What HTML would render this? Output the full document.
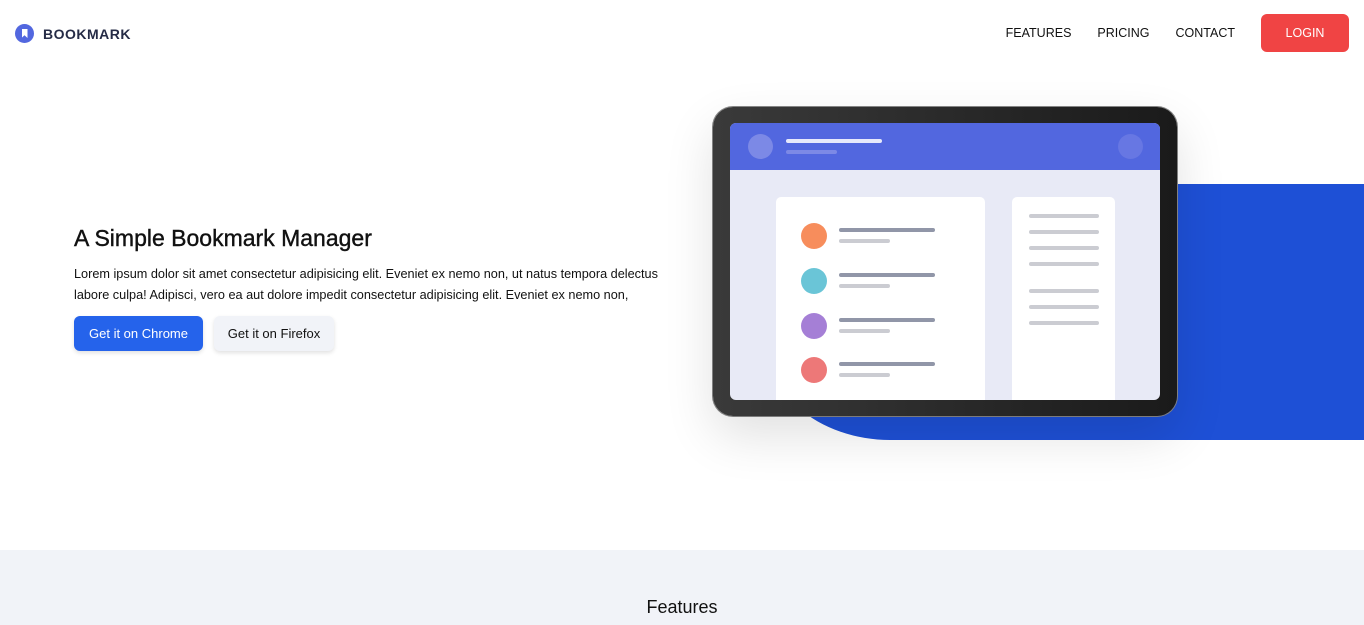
<!DOCTYPE html>
<html><head><meta charset="utf-8"><style>
*{margin:0;padding:0;box-sizing:border-box}
body{width:1364px;height:625px;overflow:hidden;background:#fff;font-family:"Liberation Sans",sans-serif;color:#111;position:relative}
.logo{position:absolute;left:15px;top:24px;display:flex;align-items:center;gap:9px;font-weight:bold;font-size:14px;color:#252b46;letter-spacing:.5px}
.logo .c{width:19px;height:19px;border-radius:50%;background:#5267df;position:relative}
.logo .c:after{content:"";position:absolute;left:6.5px;top:5px;width:6px;height:9px;background:#fff;clip-path:polygon(0 0,100% 0,100% 100%,50% 70%,0 100%)}
nav{position:absolute;right:15px;top:14px;display:flex;align-items:center;font-size:12.5px;color:#111}
nav span{margin-right:26px}
nav .btn{background:#f04444;color:#fff;border-radius:6px;width:88px;height:38px;display:flex;align-items:center;justify-content:center;margin:0}
h1{position:absolute;left:74px;top:225px;font-size:23px;font-weight:normal;color:#111;-webkit-text-stroke:.4px #111}
p{position:absolute;left:74px;top:264px;width:610px;font-size:12.7px;line-height:21px;color:#111}
.b1,.b2{position:absolute;top:316px;height:35px;border-radius:6px;font-size:13px;display:flex;align-items:center;justify-content:center;box-shadow:0 2px 4px rgba(0,0,0,.12)}
.b1{left:74px;width:129px;background:#2563eb;color:#fff}
.b2{left:214px;width:120px;background:#f1f3f8;color:#111}
.blue{position:absolute;left:760px;top:184px;width:604px;height:256px;background:#1e50d6;border-bottom-left-radius:130px 110px}
.tab{position:absolute;left:713px;top:107px;width:464px;height:309px;border-radius:20px;background:linear-gradient(90deg,#3a3a3a,#1a1a1a);box-shadow:0 20px 50px rgba(0,0,0,.12),0 0 0 1px #888}
.scr{position:absolute;left:17px;top:16px;width:430px;height:277px;border-radius:6px;background:#e8eaf6;overflow:hidden}
.hd{height:47px;background:#5267df;position:relative}
.hd .a{position:absolute;left:18px;top:11px;width:25px;height:25px;border-radius:50%;background:#7c89e6}
.hd .r{position:absolute;right:17px;top:11px;width:25px;height:25px;border-radius:50%;background:#6777e3}
.hd .l1{position:absolute;left:56px;top:16px;width:96px;height:4px;border-radius:2px;background:#e6e9fb}
.hd .l2{position:absolute;left:56px;top:27px;width:51px;height:4px;border-radius:2px;background:#7c89e6}
.c1{position:absolute;left:46px;top:74px;width:209px;height:210px;background:#fff;border-radius:5px}
.c2{position:absolute;left:282px;top:74px;width:103px;height:210px;background:#fff;border-radius:5px}
.it{position:absolute;left:25px;width:26px;height:26px;border-radius:50%}
.ln{position:absolute;left:63px;height:4px;border-radius:2px}
</style></head><body>
<div class="logo"><div class="c"></div>BOOKMARK</div>
<nav><span>FEATURES</span><span>PRICING</span><span>CONTACT</span><div class="btn">LOGIN</div></nav>
<h1>A Simple Bookmark Manager</h1>
<p>Lorem ipsum dolor sit amet consectetur adipisicing elit. Eveniet ex nemo non, ut natus tempora delectus labore culpa! Adipisci, vero ea aut dolore impedit consectetur adipisicing elit. Eveniet ex nemo non,</p>
<div class="b1">Get it on Chrome</div><div class="b2">Get it on Firefox</div>
<div class="blue"></div>
<div class="tab"><div class="scr">
<div class="hd"><div class="a"></div><div class="l1"></div><div class="l2"></div><div class="r"></div></div>
<div class="c1">
<div class="it" style="top:26px;background:#f78d5c"></div><div class="ln" style="top:31px;width:96px;background:#9196a8"></div><div class="ln" style="top:42px;width:51px;background:#cbccd2"></div>
<div class="it" style="top:71px;background:#6ac5d7"></div><div class="ln" style="top:76px;width:96px;background:#9196a8"></div><div class="ln" style="top:87px;width:51px;background:#cbccd2"></div>
<div class="it" style="top:116px;background:#a57fd6"></div><div class="ln" style="top:121px;width:96px;background:#9196a8"></div><div class="ln" style="top:132px;width:51px;background:#cbccd2"></div>
<div class="it" style="top:160px;background:#ed7878"></div><div class="ln" style="top:165px;width:96px;background:#9196a8"></div><div class="ln" style="top:176px;width:51px;background:#cbccd2"></div>
</div>
<div class="c2">
<div class="ln" style="left:17px;top:17px;width:70px;background:#cbccd2"></div>
<div class="ln" style="left:17px;top:33px;width:70px;background:#cbccd2"></div>
<div class="ln" style="left:17px;top:49px;width:70px;background:#cbccd2"></div>
<div class="ln" style="left:17px;top:65px;width:70px;background:#cbccd2"></div>
<div class="ln" style="left:17px;top:92px;width:70px;background:#cbccd2"></div>
<div class="ln" style="left:17px;top:108px;width:70px;background:#cbccd2"></div>
<div class="ln" style="left:17px;top:124px;width:70px;background:#cbccd2"></div>
</div>
</div></div>
<div style="position:absolute;left:0;top:550px;width:1364px;height:75px;background:#f1f3f8"></div>
<div style="position:absolute;left:0;top:597px;width:1364px;text-align:center;font-size:18px;color:#111">Features</div>
</body></html>
